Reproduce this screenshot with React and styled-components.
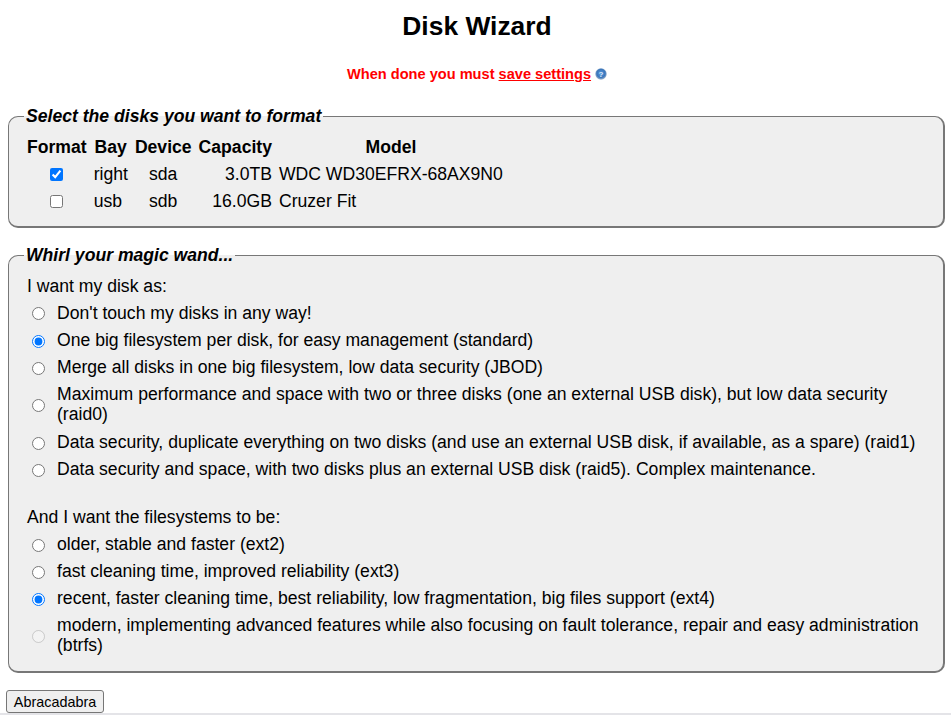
import React from 'react'
import styled, { createGlobalStyle } from 'styled-components'

const GlobalStyle = createGlobalStyle`
  html, body {
    margin: 0;
    padding: 0;
    background: #fff;
    overflow: hidden;
  }
  body {
    font-family: "Liberation Sans", Arial, sans-serif;
    font-size: 17.6px;
    color: #000;
  }
`;

const Page = styled.div`
  height: 715px;
  display: flex;
  flex-direction: column;
  overflow: hidden;
`;

const Content = styled.div`
  flex: 1;
  padding: 0 6px;
`;

const Title = styled.h1`
  margin: 0;
  padding-top: 11px;
  height: 33px;
  line-height: 30px;
  font-size: 26.4px;
  text-align: center;
  padding-left: 3px;
`;

const Notice = styled.p`
  margin: 20px 0 0;
  height: 20px;
  line-height: 20px;
  font-size: 14.6px;
  font-weight: bold;
  color: #f00;
  text-align: center;
  padding-left: 3px;
  display: flex;
  justify-content: center;
  align-items: center;
  gap: 4px;
`;

const SaveLink = styled.a`
  color: #f00;
  text-decoration: underline;
`;

const Panel = styled.fieldset`
  margin: ${(p) => p.$top}px 0 0 2px;
  padding: 0 12px 0 14px;
  min-width: 0;
  height: ${(p) => p.$height}px;
  box-sizing: border-box;
  background: #efefef;
  border: 1px solid #777;
  border-bottom-width: 2px;
  border-right-width: 2px;
  border-radius: 10px;
`;

const Legend = styled.legend`
  padding: 0 2px;
  margin-left: 1px;
  font-size: 17.6px;
  line-height: 20px;
  font-weight: bold;
  font-style: italic;
`;

const DiskTable = styled.table`
  border-collapse: separate;
  border-spacing: 0;
  margin: 8px 0 0 4px;
  font-size: 17.6px;
`;

const Head = styled.th`
  padding: 0 3.5px 0 ${(p) => p.$pad ?? 3.5}px;
  height: 27px;
  font-weight: bold;
  text-align: center;
  white-space: nowrap;
`;

const Cell = styled.td`
  height: 27px;
  padding: 0 3.5px;
  white-space: nowrap;
  text-align: ${(p) => p.$align || 'left'};
  padding-left: ${(p) => p.$pad ?? 3.5}px;
`;

const Check = styled.input`
  display: block;
  margin: 0 auto;
  width: 13px;
  height: 13px;
`;

const Wand = styled.div`
  margin-left: 4px;
  padding-top: 7px;
`;

const Lead = styled.div`
  line-height: 20px;
  height: 27px;
  display: flex;
  align-items: center;
  margin-top: ${(p) => p.$top || 0}px;
`;

const Choice = styled.label`
  display: grid;
  grid-template-columns: 30px 1fr;
  align-items: center;
  padding: 3.5px 0;
  line-height: 20.2px;
  color: #000;
`;

const Radio = styled.input`
  margin: 0 0 0 5px;
  width: 13px;
  height: 13px;
  position: relative;
  top: 1.4px;
`;

const SubmitButton = styled.button`
  display: block;
  margin-top: 17px;
  height: 23px;
  width: 98px;
  padding: 0;
  font-family: "Liberation Sans", Arial, sans-serif;
  font-size: 14.4px;
  color: #000;
  background: #efefef;
  border: 1px solid #767676;
  border-radius: 3px;
`;

const BottomStrip = styled.div`
  height: 2px;
  background: #e4e4e8;
`;

const HelpIcon = () => (
  <svg width="12" height="12" viewBox="0 0 12 12" aria-hidden="true">
    <defs>
      <radialGradient id="help" cx="0.5" cy="0.45" r="0.6">
        <stop offset="0" stopColor="#5b9be0" />
        <stop offset="0.6" stopColor="#3a76bb" />
        <stop offset="1" stopColor="#c3cad3" />
      </radialGradient>
    </defs>
    <circle cx="6" cy="6" r="5.7" fill="url(#help)" />
    <text x="6" y="8.6" fontSize="8" fontWeight="bold" textAnchor="middle" fill="#dbe9f8" fontFamily="Liberation Sans">?</text>
  </svg>
);

const disks = [
  { bay: 'right', dev: 'sda', cap: '3.0TB', model: 'WDC WD30EFRX-68AX9N0', on: true },
  { bay: 'usb', dev: 'sdb', cap: '16.0GB', model: 'Cruzer Fit', on: false },
];

const layouts = [
  { label: "Don't touch my disks in any way!" },
  { label: 'One big filesystem per disk, for easy management (standard)', on: true },
  { label: 'Merge all disks in one big filesystem, low data security (JBOD)' },
  { label: 'Maximum performance and space with two or three disks (one an external USB disk), but low data security (raid0)' },
  { label: 'Data security, duplicate everything on two disks (and use an external USB disk, if available, as a spare) (raid1)' },
  { label: 'Data security and space, with two disks plus an external USB disk (raid5). Complex maintenance.' },
];

const filesystems = [
  { label: 'older, stable and faster (ext2)' },
  { label: 'fast cleaning time, improved reliability (ext3)' },
  { label: 'recent, faster cleaning time, best reliability, low fragmentation, big files support (ext4)', on: true },
  { label: 'modern, implementing advanced features while also focusing on fault tolerance, repair and easy administration (btrfs)', off: true },
];

const App = () => {
  return (
    <Page>
      <GlobalStyle />
      <Content>
        <Title>Disk Wizard</Title>
        <Notice>
          <span>When done you must <SaveLink href="#">save settings</SaveLink></span>
          <HelpIcon />
        </Notice>

        <Panel $top={22} $height={122}>
          <Legend>Select the disks you want to format</Legend>
          <DiskTable>
            <thead>
              <tr>
                <Head $pad={0}>Format</Head>
                <Head>Bay</Head>
                <Head>Device</Head>
                <Head>Capacity</Head>
                <Head>Model</Head>
              </tr>
            </thead>
            <tbody>
              {disks.map((d) => (
                <tr key={d.dev}>
                  <Cell $pad={0}><Check type="checkbox" defaultChecked={d.on} /></Cell>
                  <Cell>{d.bay}</Cell>
                  <Cell $pad={17.5}>{d.dev}</Cell>
                  <Cell $align="right">{d.cap}</Cell>
                  <Cell>{d.model}</Cell>
                </tr>
              ))}
            </tbody>
          </DiskTable>
        </Panel>

        <Panel $top={17} $height={428}>
          <Legend>Whirl your magic wand...</Legend>
          <Wand>
            <Lead>I want my disk as:</Lead>
            {layouts.map((o) => (
              <Choice key={o.label}>
                <Radio type="radio" name="layout" defaultChecked={o.on} />
                <span>{o.label}</span>
              </Choice>
            ))}
            <Lead $top={20.7}>And I want the filesystems to be:</Lead>
            {filesystems.map((o) => (
              <Choice key={o.label}>
                <Radio type="radio" name="fs" defaultChecked={o.on} disabled={o.off} />
                <span>{o.label}</span>
              </Choice>
            ))}
          </Wand>
        </Panel>

        <SubmitButton>Abracadabra</SubmitButton>
      </Content>
      <BottomStrip />
    </Page>
  )
}

export default App
